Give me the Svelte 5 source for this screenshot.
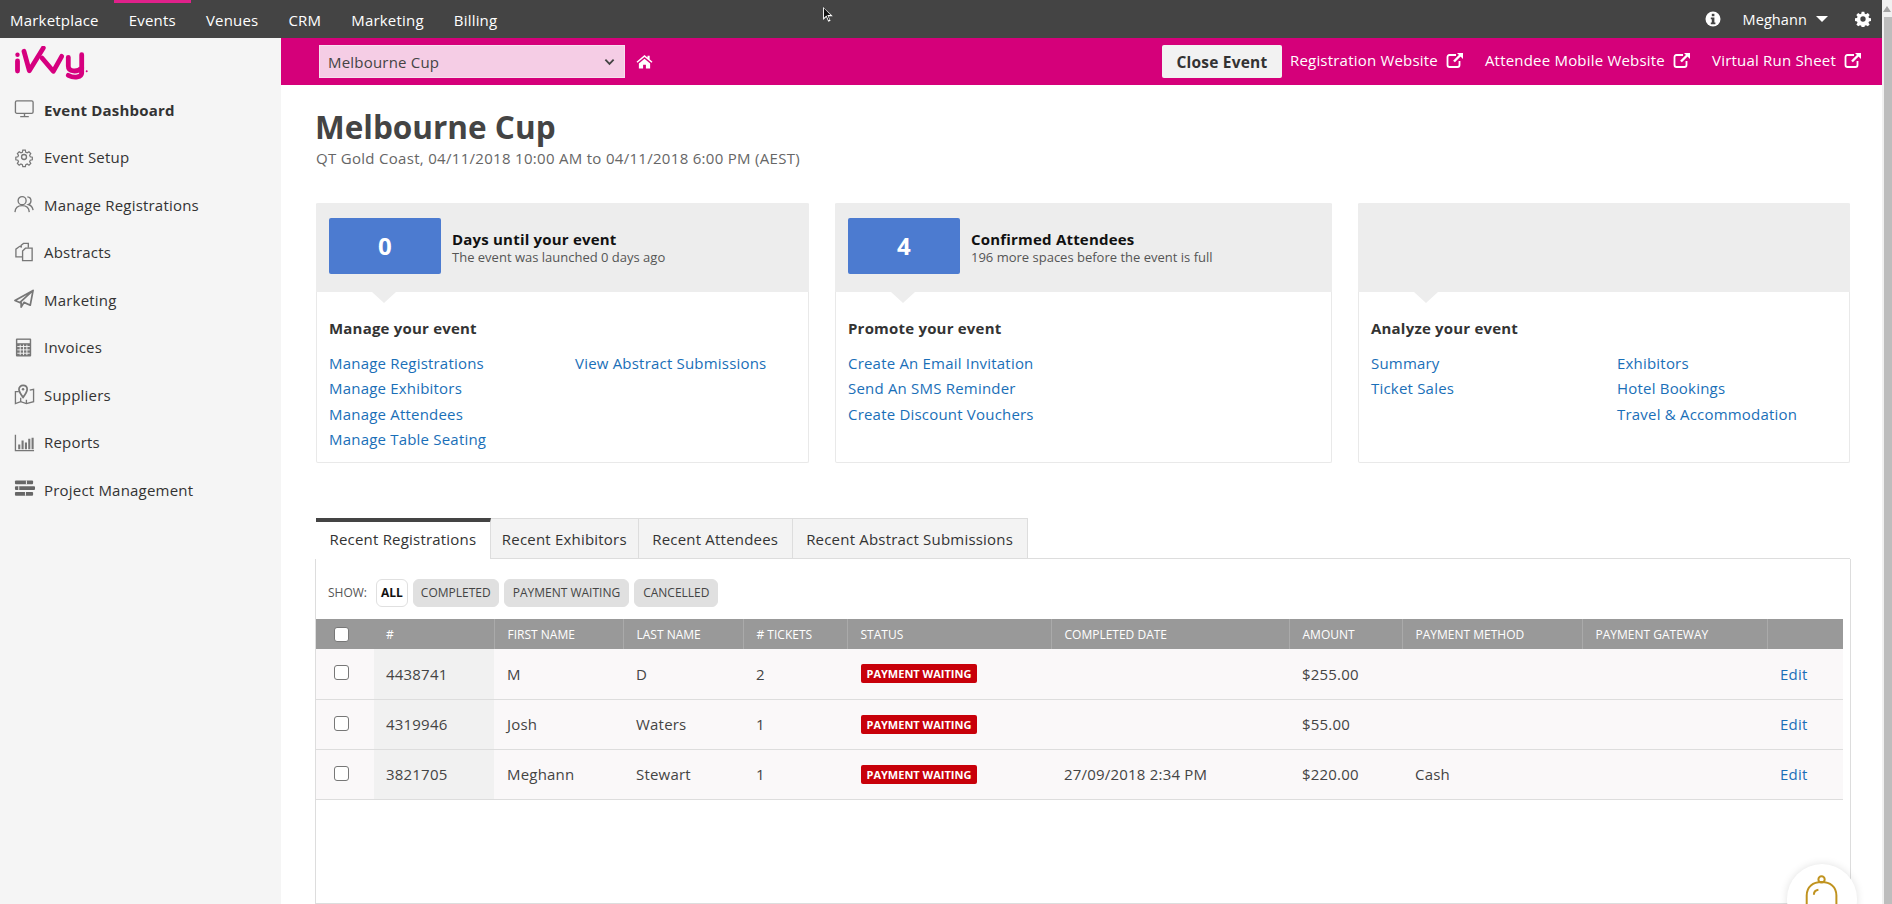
<script lang="ts">
	const topLinks = [
		{ label: 'Marketplace' },
		{ label: 'Events', active: true },
		{ label: 'Venues' },
		{ label: 'CRM' },
		{ label: 'Marketing' },
		{ label: 'Billing' }
	];

	const sideLinks = [
		{ label: 'Event Dashboard', icon: 'monitor', active: true },
		{ label: 'Event Setup', icon: 'gear' },
		{ label: 'Manage Registrations', icon: 'people' },
		{ label: 'Abstracts', icon: 'copies' },
		{ label: 'Marketing', icon: 'plane' },
		{ label: 'Invoices', icon: 'calc' },
		{ label: 'Suppliers', icon: 'map' },
		{ label: 'Reports', icon: 'bars' },
		{ label: 'Project Management', icon: 'stack' }
	];

	const headerLinks = ['Registration Website', 'Attendee Mobile Website', 'Virtual Run Sheet'];

	const cards = [
		{
			number: '0',
			title: 'Days until your event',
			sub: 'The event was launched 0 days ago',
			heading: 'Manage your event',
			cols: [
				['Manage Registrations', 'Manage Exhibitors', 'Manage Attendees', 'Manage Table Seating'],
				['View Abstract Submissions']
			]
		},
		{
			number: '4',
			title: 'Confirmed Attendees',
			sub: '196 more spaces before the event is full',
			heading: 'Promote your event',
			cols: [['Create An Email Invitation', 'Send An SMS Reminder', 'Create Discount Vouchers'], []]
		},
		{
			heading: 'Analyze your event',
			cols: [
				['Summary', 'Ticket Sales'],
				['Exhibitors', 'Hotel Bookings', 'Travel & Accommodation']
			]
		}
	];

	const tabs = ['Recent Registrations', 'Recent Exhibitors', 'Recent Attendees', 'Recent Abstract Submissions'];
	const filters = ['Completed', 'Payment Waiting', 'Cancelled'];

	const columns = [
		{ label: '#', width: 120 },
		{ label: 'First Name', width: 129 },
		{ label: 'Last Name', width: 120 },
		{ label: '# Tickets', width: 104 },
		{ label: 'Status', width: 204 },
		{ label: 'Completed Date', width: 238 },
		{ label: 'Amount', width: 113 },
		{ label: 'Payment Method', width: 180 },
		{ label: 'Payment Gateway', width: 185 },
		{ label: '', width: 76 }
	];

	const rows = [
		{ id: '4438741', first: 'M', last: 'D', tickets: 2, date: '', amount: '$255.00', method: '' },
		{ id: '4319946', first: 'Josh', last: 'Waters', tickets: 1, date: '', amount: '$55.00', method: '' },
		{
			id: '3821705',
			first: 'Meghann',
			last: 'Stewart',
			tickets: 1,
			date: '27/09/2018 2:34 PM',
			amount: '$220.00',
			method: 'Cash'
		}
	];
</script>

{#snippet sideIcon(name)}
	<svg class="side-icon" viewBox="0 0 22 22" fill="none" stroke="#777" stroke-width="1.4" aria-hidden="true">
		{#if name === 'monitor'}
			<rect x="1.5" y="2" width="18.5" height="13" rx="1.5" />
			<path d="M11 15v3M6.5 18.5h9" />
		{:else if name === 'gear'}
			<circle cx="10.5" cy="10.5" r="2.6" />
			<path
				d="M9 2.5h3l.5 2.4 1.7.7 2-1.3 2.1 2.1-1.3 2 .7 1.7 2.4.5v3l-2.4.5-.7 1.7 1.3 2-2.1 2.1-2-1.3-1.700.7-.5 2.4H9l-.5-2.4-1.7-.7-2 1.3-2.1-2.1 1.3-2-.7-1.7-2.4-.5v-3l2.4-.5.7-1.7-1.3-2 2.1-2.1 2 1.3 1.7-.7z"
				transform="translate(1.1 1.1) scale(.9)"
			/>
		{:else if name === 'people'}
			<circle cx="8.5" cy="7" r="4.2" />
			<path d="M1 19c.3-4.500 3-6.800 7.500-6.800S15.700 14.500 16 19" />
			<path d="M14 3c2.500 .3 3.800 2 3.800 4s-1 3.300-2.800 4c2.800 .8 4.500 3 5 6" />
		{:else if name === 'copies'}
			<path d="M7.500 6V3.500L10 1.500h5V6" />
			<path d="M8.500 15.500H2V7.500L6 4.500h2" />
			<path d="M9 9.500L12 6.500h7v13H9z" />
		{:else if name === 'plane'}
			<path d="M20 1.500L1 12l5 2.200L20 1.500L17 17l-6.500-3L7.500 19v-5" stroke-width="1.800" stroke-linejoin="round" />
		{:else if name === 'calc'}
			<rect x="2" y="1.500" width="16" height="19" rx="1" fill="#777" stroke="none" />
			<rect x="3.500" y="3" width="13" height="3.500" fill="#f5f5f5" stroke="none" />
			<path d="M3.500 10h13M3.500 13.500h13M3.500 17h13M6.500 8v11M10 8v11M13.500 8v11" stroke="#f5f5f5" stroke-width="1" />
		{:else if name === 'map'}
			<path d="M5 8H1.500v12.500l5.500-2 6 2 7.500-2V5.500l-4 1" />
			<path d="M9.500 1.500c-2.600 0-4.300 1.800-4.300 4 0 2.800 4.300 8.500 4.300 8.500s4.300-5.700 4.300-8.500c0-2.200-1.700-4-4.300-4z" stroke-width="1.800" />
			<circle cx="9.500" cy="5.500" r="1.300" fill="#777" stroke="none" />
			<path d="M7 18.500v-4M13 20.500v-4" />
		{:else if name === 'bars'}
			<path d="M1.500 3v16.500H21" />
			<path d="M5.500 13v5M9 9v9M12.500 11v7M16 7v11M19.500 6v12" stroke-width="2.200" />
		{:else}
			<rect x="1" y="1.500" width="19" height="4" rx="1" fill="#666" stroke="none" />
			<rect x="1" y="7.500" width="21" height="4" rx="1" fill="#666" stroke="none" />
			<rect x="1" y="13.500" width="19" height="4" rx="1" fill="#666" stroke="none" />
			<path d="M13 1.500v4M5 7.500v4M12 13.500v4" stroke="#f5f5f5" stroke-width="1" />
		{/if}
	</svg>
{/snippet}

<div class="page">
	<div class="viewport">
		<header class="topbar">
			<nav class="top-nav">
				{#each topLinks as link (link.label)}
					<a class="top-link" class:active={link.active} href="#top">{link.label}</a>
				{/each}
			</nav>
			<div class="top-tools">
				<svg class="info" viewBox="0 0 16 16" aria-hidden="true">
					<circle cx="8" cy="8" r="7.500" fill="#fff" />
					<rect x="6.800" y="2.800" width="2.600" height="2.400" fill="#444" />
					<path d="M5.800 6.500h3.600v5h1v1.700H5.800v-1.700h1v-3.300h-1z" fill="#444" />
				</svg>
				<span class="user">Meghann</span>
				<span class="caret"></span>
				<svg class="cog" viewBox="0 0 24 24" aria-hidden="true">
					<path
						fill="#fff"
						fill-rule="evenodd"
						d="M10 1h4l.6 3.100 1.900.8 2.700-1.800 2.800 2.800-1.800 2.700.8 1.900 3 .5v4l-3 .6-.8 1.900 1.800 2.700-2.800 2.800-2.700-1.800-1.900.8-.6 3.100h-4l-.6-3.100-1.900-.8-2.700 1.800-2.800-2.800 1.800-2.700-.8-1.900-3-.6v-4l3-.5.8-1.900-1.800-2.700 2.800-2.800 2.700 1.800 1.900-.8zM12 8a4 4 0 1 0 0 8 4 4 0 0 0 0-8z"
					/>
				</svg>
			</div>
		</header>

		<div class="body">
			<aside class="sidebar">
				<svg class="logo" viewBox="0 0 75 34" fill="none" stroke="#d6007f" stroke-width="4.800" stroke-linecap="round" stroke-linejoin="round" role="img" aria-label="iVvy logo">
					<path d="M2.500 15v10" />
					<circle cx="2.500" cy="8.700" r="2.200" fill="#d6007f" stroke="none" />
					<path d="M9 5.300l5.300 19.400L28.300 2" />
					<path d="M27 12l11.300 13.300 8.400-15" />
					<path d="M53.300 11.300V20c0 6 9 6.500 13.400 2M66.700 8.700V27c0 4-7 5.500-13.400 2.300" />
					<circle cx="71.700" cy="25.300" r="1" fill="#d6007f" stroke="none" />
				</svg>
				<nav class="side-nav">
					{#each sideLinks as link (link.label)}
						<a class="side-link" class:active={link.active} href="#top">
							{@render sideIcon(link.icon)}
							<span>{link.label}</span>
						</a>
					{/each}
				</nav>
			</aside>

			<main class="main">
				<div class="event-bar">
					<div class="event-picker">
						<div class="select">
							<span>Melbourne Cup</span>
							<svg viewBox="0 0 12 8" fill="none" stroke="#444" stroke-width="2" aria-hidden="true">
								<path d="M1.500 1.500L6 6l4.500-4.500" />
							</svg>
						</div>
						<svg class="home" viewBox="0 0 18 16" aria-hidden="true">
							<path fill="#fff" d="M9 1L0.500 8.200l1 1.200L9 3.200l7.500 6.200 1-1.200L14.500 5.700V1.800h-2.300v2L9 1zM3 10v5.500h4.500v-4h3v4H15V10L9 5z" />
						</svg>
					</div>
					<div class="event-actions">
						<button class="close-event" type="button">Close Event</button>
						{#each headerLinks as link (link)}
							<a class="event-link" href="#top">
								{link}
								<svg viewBox="0 0 18 16" fill="none" stroke="#fff" stroke-width="1.800" aria-hidden="true">
									<path d="M10 3H3.500C2.200 3 1.500 3.800 1.500 5v8c0 1.200 .7 2 2 2h8c1.200 0 2-.8 2-2V9" />
									<path d="M8 9.500L15 2.500" stroke-width="2.400" />
									<path d="M11 1h6v6z" fill="#fff" stroke="none" />
								</svg>
							</a>
						{/each}
					</div>
				</div>

				<div class="content">
					<h1>Melbourne Cup</h1>
					<p class="event-meta">QT Gold Coast, 04/11/2018 10:00 AM to 04/11/2018 6:00 PM (AEST)</p>

					<section class="cards">
						{#each cards as card (card.heading)}
							<article class="card">
								<div class="card-head">
									{#if card.number}
										<div class="count">{card.number}</div>
										<div class="card-text">
											<div class="card-title">{card.title}</div>
											<div class="card-sub">{card.sub}</div>
										</div>
									{/if}
								</div>
								<div class="card-body">
									<h2>{card.heading}</h2>
									<div class="link-cols">
										{#each card.cols as col, i (i)}
											<ul>
												{#each col as item (item)}
													<li><a href="#top">{item}</a></li>
												{/each}
											</ul>
										{/each}
									</div>
								</div>
							</article>
						{/each}
					</section>

					<section class="recent">
						<div class="tabs">
							{#each tabs as tab, i (tab)}
								<button class="tab" class:selected={i === 0} type="button">{tab}</button>
							{/each}
						</div>
						<div class="panel">
							<div class="filters">
								<span class="show">Show:</span>
								<span class="pill current">All</span>
								{#each filters as filter (filter)}
									<span class="pill">{filter}</span>
								{/each}
							</div>
							<table>
								<thead>
									<tr>
										<th class="check-col"><input type="checkbox" aria-label="Select all" /></th>
										{#each columns as col, i (i)}
											<th style="width: {col.width}px">{col.label}</th>
										{/each}
									</tr>
								</thead>
								<tbody>
									{#each rows as row (row.id)}
										<tr>
											<td class="check-col"><input type="checkbox" aria-label="Select {row.id}" /></td>
											<td class="id-cell">{row.id}</td>
											<td>{row.first}</td>
											<td>{row.last}</td>
											<td>{row.tickets}</td>
											<td><span class="badge">Payment Waiting</span></td>
											<td>{row.date}</td>
											<td>{row.amount}</td>
											<td>{row.method}</td>
											<td></td>
											<td><a href="#top">Edit</a></td>
										</tr>
									{/each}
								</tbody>
							</table>
						</div>
					</section>
				</div>
			</main>
		</div>

		<div class="bell-button">
			<svg viewBox="0 0 40 40" fill="none" stroke="#c0931f" stroke-width="2.200" aria-hidden="true">
				<circle cx="19.500" cy="6" r="3.500" />
				<path d="M3 40V24C3 14 10 9 19.500 9S36 14 36 24v16" />
				<path d="M11 23c0-3 1.500-5 5-5.500" />
			</svg>
		</div>

		<svg class="cursor" viewBox="0 0 14 20" aria-hidden="true">
			<path d="M1 1v14.500l3.500-3.300 2.300 5.300 2.500-1-2.300-5.200h4.800z" fill="#fff" />
			<path d="M2 2.500v10.500l2.700-2.500 2.400 5.300 1-.4-2.400-5.400h3.500z" fill="#111" />
		</svg>
	</div>

	<div class="scrollbar">
		<span class="scroll-up"></span>
		<span class="scroll-thumb"></span>
	</div>
</div>

<style>
	:global(body) {
		font-family: 'Open Sans', 'Noto Sans', sans-serif;
		font-size: 15px;
		letter-spacing: 0.2px;
		color: #444;
		background: #fff;
	}

	a {
		color: inherit;
		text-decoration: none;
	}

	.page {
		display: flex;
		height: 904px;
		overflow: hidden;
	}

	.viewport {
		position: relative;
		display: flex;
		flex: 1;
		flex-direction: column;
		min-width: 0;
		overflow: hidden;
	}

	.scrollbar {
		display: flex;
		flex-direction: column;
		align-items: flex-end;
		width: 10px;
		background: #f1f1f1;
	}

	.scroll-up {
		width: 0;
		height: 0;
		margin: 6px 1px 5px 0;
		border: 4px solid transparent;
		border-top: 0;
		border-bottom: 6px solid #a3a3a3;
	}

	.scroll-thumb {
		flex: 1;
		width: 8px;
		background: #bdbdbd;
	}

	.topbar {
		display: flex;
		flex: none;
		justify-content: space-between;
		height: 38px;
		background: #444;
		color: #fff;
	}

	.top-nav {
		display: flex;
	}

	.top-link {
		box-sizing: border-box;
		height: 38px;
		padding: 8px 15px 0;
		border-top: 3px solid transparent;
		line-height: 19px;
	}

	.top-link:first-child {
		padding-left: 10px;
	}

	.top-link.active {
		border-top-color: #e0218a;
	}

	.top-tools {
		display: flex;
		align-items: center;
		padding: 0 11px 0 0;
	}

	.info {
		width: 16px;
		height: 16px;
		margin-right: 22px;
	}

	.user {
		margin-right: 9px;
		font-size: 14.500px;
		letter-spacing: 0.1px;
	}

	.caret {
		width: 0;
		height: 0;
		margin-right: 27px;
		border: 6px solid transparent;
		border-top: 6px solid #fff;
		border-bottom: 0;
	}

	.cog {
		width: 16px;
		height: 16px;
	}

	.body {
		display: flex;
		flex: 1;
		min-height: 0;
	}

	.sidebar {
		flex: none;
		width: 281px;
		background: #f5f5f5;
	}

	.logo {
		display: block;
		width: 75px;
		height: 34px;
		margin: 8px 0 0 15px;
	}

	.side-nav {
		display: flex;
		flex-direction: column;
		margin-top: 6px;
	}

	.side-link {
		display: flex;
		align-items: center;
		height: 47.500px;
		padding-left: 14px;
		color: #333;
	}

	.side-link.active {
		font-weight: 700;
	}

	.side-icon {
		flex: none;
		width: 21px;
		height: 21px;
		margin-right: 9px;
	}

	.main {
		display: flex;
		flex: 1;
		flex-direction: column;
		min-width: 0;
	}

	.event-bar {
		display: flex;
		flex: none;
		justify-content: space-between;
		align-items: center;
		height: 47px;
		padding: 0 20px 0 38px;
		background: #d5007a;
		color: #fff;
	}

	.event-picker {
		display: flex;
		align-items: center;
	}

	.select {
		display: flex;
		justify-content: space-between;
		align-items: center;
		box-sizing: border-box;
		width: 306px;
		height: 33px;
		padding: 0 9px 0 8px;
		border: 1px solid #f7dfee;
		background: #f5cde5;
		color: #444;
	}

	.select svg {
		width: 11px;
		height: 8px;
	}

	.home {
		width: 17px;
		height: 15px;
		margin-left: 11px;
	}

	.event-actions {
		display: flex;
		align-items: center;
	}

	.close-event {
		width: 120px;
		height: 33px;
		margin-right: 8px;
		border: 0;
		border-radius: 2px;
		background: #f2f2f2;
		color: #333;
		font: 700 15.500px 'Open Sans', sans-serif;
		letter-spacing: 0.2px;
	}

	.event-link {
		display: flex;
		align-items: center;
		margin-top: -3px;
		margin-right: 21px;
	}

	.event-link:last-child {
		margin-right: 0;
	}

	.event-link svg {
		width: 18px;
		height: 16px;
		margin-left: 8px;
	}

	.content {
		display: flex;
		flex: 1;
		flex-direction: column;
		min-height: 0;
		padding: 0 32px 0 35px;
	}

	h1 {
		margin: 21px 0 0 -1px;
		font-size: 31.500px;
		font-weight: 700;
		letter-spacing: 0;
		line-height: 42px;
		color: #444;
	}

	.event-meta {
		margin: 0;
		letter-spacing: 0.3px;
		line-height: 20px;
		color: #666;
	}

	.cards {
		display: grid;
		flex: none;
		grid-template-columns: 493fr 497fr 492fr;
		gap: 26px;
		margin-top: 35px;
	}

	.card {
		box-sizing: border-box;
		height: 260px;
		border: 1px solid #e9e9e9;
		border-top: 0;
		border-radius: 2px;
	}

	.card-head {
		position: relative;
		display: flex;
		gap: 11px;
		align-items: center;
		box-sizing: border-box;
		height: 89px;
		margin: 0 -1px;
		padding: 0 13px 3px;
		background: #ededed;
		border-radius: 2px 2px 0 0;
	}

	.card-head::after {
		content: '';
		position: absolute;
		left: 56px;
		bottom: -11px;
		border: 12px solid transparent;
		border-top: 11px solid #ededed;
		border-bottom: 0;
	}

	.count {
		flex: none;
		width: 112px;
		height: 56px;
		border-radius: 2px;
		background: #4c7bd0;
		color: #fff;
		font-size: 24px;
		font-weight: 700;
		line-height: 56px;
		text-align: center;
	}

	.card-text {
		margin-top: 3px;
	}

	.card-title {
		color: #111;
		font-weight: 700;
		line-height: 19px;
	}

	.card-sub {
		color: #555;
		font-size: 13px;
		letter-spacing: 0;
		line-height: 17px;
	}

	.card-body {
		padding: 26px 12px 0;
	}

	h2 {
		margin: 0;
		color: #333;
		font-size: 15px;
		font-weight: 700;
		line-height: 20px;
	}

	.link-cols {
		display: grid;
		grid-template-columns: 246px 1fr;
		margin-top: 13px;
	}

	ul {
		margin: 0;
		padding: 0;
		list-style: none;
	}

	li {
		height: 25.300px;
		line-height: 25.300px;
	}

	li a,
	td a {
		color: #1a6fb8;
	}

	.recent {
		display: flex;
		flex: 1;
		flex-direction: column;
		margin-top: 55px;
	}

	.tabs {
		display: flex;
		flex: none;
		height: 41px;
	}

	.tab {
		box-sizing: border-box;
		padding: 0 11px;
		border: 1px solid #ddd;
		border-left: 0;
		background: #f3f3f3;
		color: #333;
		font: 15px 'Open Sans', sans-serif;
		letter-spacing: 0.2px;
	}

	.tab:nth-child(n + 3) {
		padding: 0 13.500px;
	}

	.tab.selected {
		padding: 0 13.500px 4px;
		border: 0;
		border-top: 4px solid #444;
		border-right: 1px solid #ddd;
		background: #fff;
	}

	.panel {
		position: relative;
		flex: 1;
		margin: 0 -1px;
		border: 1px solid #ddd;
		border-top: 0;
	}

	.panel::before {
		content: '';
		position: absolute;
		top: -1px;
		left: 711px;
		right: 0;
		border-top: 1px solid #ddd;
	}

	.filters {
		display: flex;
		gap: 5px;
		align-items: center;
		box-sizing: border-box;
		height: 60px;
		padding: 7px 0 0 12px;
	}

	.show {
		width: 43px;
		color: #555;
		font-size: 12px;
		letter-spacing: 0;
		text-transform: uppercase;
	}

	.pill {
		padding: 0 7px;
		border: 1px solid #e0e0e0;
		border-radius: 6px;
		background: #e0e0e0;
		color: #444;
		font-size: 12px;
		letter-spacing: 0;
		line-height: 26px;
		text-transform: uppercase;
	}

	.pill:nth-child(n + 4) {
		padding: 0 8px;
	}

	.pill.current {
		padding: 0 4px;
		background: #fff;
		color: #111;
		font-size: 12px;
		font-weight: 700;
	}

	table {
		width: 1527px;
		border-collapse: collapse;
		table-layout: fixed;
	}

	th,
	td {
		box-sizing: border-box;
		padding: 0 0 0 13px;
	}

	th {
		height: 30px;
		border-left: 1px solid #aaa;
		background: #999;
		color: #fff;
		font-size: 12px;
		font-weight: 400;
		letter-spacing: 0;
		text-align: left;
		text-transform: uppercase;
	}

	th:nth-child(2) {
		border-left: 0;
		padding-left: 12px;
	}

	td {
		height: 50px;
		border-bottom: 1px solid #ddd;
		background: #faf8f9;
	}

	.check-col {
		width: 58px;
		padding-left: 18px;
		border-left: 0;
	}

	.id-cell {
		padding-left: 12px;
		background: #f1f1f1;
	}

	input {
		display: block;
		box-sizing: border-box;
		width: 15px;
		height: 15px;
		margin: 0;
		border: 1px solid #777;
		border-radius: 3px;
		background: #fff;
		appearance: none;
	}

	td input {
		position: relative;
		top: -1px;
	}

	.badge {
		display: inline-block;
		position: relative;
		top: -1px;
		margin-left: 1px;
		padding: 0 5.500px;
		border-radius: 2px;
		background: #c8000a;
		color: #fff;
		font-size: 11px;
		font-weight: 700;
		letter-spacing: 0;
		line-height: 19px;
		text-transform: uppercase;
	}

	.bell-button {
		position: absolute;
		left: 1787px;
		top: 864px;
		box-sizing: border-box;
		width: 70px;
		height: 70px;
		padding: 10px 17px 0;
		border-radius: 50%;
		background: #fff;
		box-shadow: 0 0 8px rgba(0, 0, 0, 0.12);
	}

	.bell-button svg {
		display: block;
		width: 36px;
		height: 36px;
	}

	.cursor {
		position: absolute;
		left: 822px;
		top: 6px;
		width: 13px;
		height: 18px;
	}
</style>
